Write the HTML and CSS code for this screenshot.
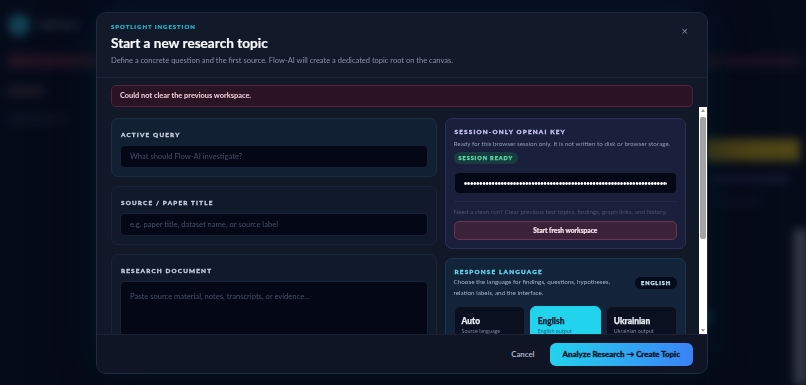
FILE: index.html
```html
<!DOCTYPE html>
<html lang="en">
<head>
  <meta charset="UTF-8" />
  <meta name="viewport" content="width=device-width, initial-scale=1.0"/>
  <title>Flow-AI</title>
  <link rel="stylesheet" href="styles.css">
</head>

<body>
  <!-- app behind the modal, blurred -->
  <div class="app">
    <aside class="side">
      <div class="brand">
        <span class="brand-dot"></span>
        <span class="brand-name"></span>
      </div>
      <div class="side-alert"></div>
      <div class="side-item"></div>
      <div class="side-item faint"></div>
    </aside>
    <div class="canvas"></div>
    <aside class="panel">
      <div class="panel-alert"></div>
      <div class="panel-btn"></div>
      <div class="panel-line"></div>
      <div class="panel-line short"></div>
      <div class="panel-bottom">
        <span class="panel-spot"></span>
        <span class="panel-card"></span>
      </div>
    </aside>
  </div>

  <div class="overlay">
    <section class="modal">
      <header class="modal-head">
        <div>
          <p class="eyebrow">Spotlight ingestion</p>
          <h1>Start a new research topic</h1>
          <p class="lead">Define a concrete question and the first source. Flow-AI will create a dedicated topic root on the canvas.</p>
        </div>
        <button class="close" aria-label="Close">&times;</button>
      </header>

      <div class="error">Could not clear the previous workspace.</div>

      <div class="modal-body">
        <div class="scroll">
          <div class="grid">
            <div class="col">
              <div class="card card-query">
                <label class="label" for="query">Active query</label>
                <input id="query" class="field" type="text" placeholder="What should Flow-AI investigate?">
              </div>
              <div class="card">
                <label class="label" for="source">Source / paper title</label>
                <input id="source" class="field" type="text" placeholder="e.g. paper title, dataset name, or source label">
              </div>
              <div class="card">
                <label class="label" for="doc">Research document</label>
                <textarea id="doc" class="field area" placeholder="Paste source material, notes, transcripts, or evidence..."></textarea>
              </div>
            </div>

            <div class="col">
              <div class="card card-key">
                <p class="label label-key">Session-only OpenAI key</p>
                <p class="small">Ready for this browser session only. It is not written to disk or browser storage.</p>
                <span class="badge badge-ready">Session ready</span>
                <input class="field field-key" type="password" value="sk-proj-aaaaaaaaaaaaaaaaaaaaaaaaaaaaaaaaaaaaaaaaaaaaaaaaaaaaaaaaaaaaaaaaaaaaaaaaaaaaaaaaaaaaa">
                <div class="key-foot">
                  <p class="small dim">Need a clean run? Clear previous test topics, findings, graph links, and history.</p>
                  <button class="btn-reset">Start fresh workspace</button>
                </div>
              </div>

              <div class="card card-lang">
                <div class="lang-head">
                  <div>
                    <p class="label label-lang">Response language</p>
                    <p class="small lang-desc">Choose the language for findings, questions, hypotheses, relation labels, and the interface.</p>
                  </div>
                  <span class="badge badge-lang">English</span>
                </div>
                <div class="options">
                  <div class="option">
                    <strong>Auto</strong>
                    <span>Source language</span>
                  </div>
                  <div class="option active">
                    <strong>English</strong>
                    <span>English output</span>
                  </div>
                  <div class="option">
                    <strong>Ukrainian</strong>
                    <span>Ukrainian output</span>
                  </div>
                </div>
              </div>
            </div>
          </div>
        </div>

        <!-- scrollbar of the body -->
        <div class="scrollbar">
          <span class="arrow up"></span>
          <span class="track"><span class="thumb"></span></span>
          <span class="arrow down"></span>
        </div>
      </div>

      <footer class="modal-foot">
        <button class="btn-cancel">Cancel</button>
        <button class="btn-primary">Analyze Research &rarr; Create Topic</button>
      </footer>
    </section>
  </div>
</body>
</html>
```

FILE: styles.css
```css
* {
  box-sizing: border-box;
}
html, body {
  height: 100%;
}
body {
  margin: 0;
  font-family: 'Lato', 'Noto Sans', sans-serif;
  background-color: #080d1e;
  color: #e2e8f0;
  overflow: hidden;
}
p {
  margin: 0;
}

/* blurred app in the back */
.app {
  height: 100%;
  display: grid;
  grid-template-columns: 110px 1fr 110px;
  filter: blur(5px);
  opacity: 0.85;
}
.side {
  padding: 14px 8px;
  display: flex;
  flex-direction: column;
  gap: 18px;
}
.brand {
  display: flex;
  align-items: center;
  gap: 8px;
}
.brand-dot {
  width: 22px;
  height: 22px;
  border-radius: 50%;
  background: #1c6f86;
}
.brand-name {
  width: 40px;
  height: 6px;
  background: #3a4252;
}
.side-alert {
  height: 14px;
  background: #3b1c2e;
}
.side-item {
  width: 36px;
  height: 10px;
  background: #2e2830;
}
.side-item.faint {
  width: 60px;
  background: #161c2c;
}
.canvas {
  background: #0a1022;
}
.panel {
  padding: 55px 6px 0 4px;
  display: flex;
  flex-direction: column;
  gap: 14px;
}
.panel-alert {
  height: 12px;
  background: #2c1a2c;
  margin-bottom: 58px;
}
.panel-btn {
  height: 22px;
  background: #8b7719;
}
.panel-line {
  height: 8px;
  background: #252648;
  margin: 0 12px;
}
.panel-line.short {
  background: #171a30;
  margin-right: 40px;
}
.panel-bottom {
  flex: 1;
  display: flex;
  align-items: flex-start;
  justify-content: space-between;
  padding-top: 10px;
}
.panel-spot {
  width: 10px;
  height: 16px;
  margin-top: 80px;
  background: #1a6e84;
  border-radius: 50%;
}
.panel-card {
  width: 14px;
  height: 100%;
  background: #5a5f6c;
  margin-right: -8px;
}

/* modal */
.overlay {
  position: fixed;
  inset: 0;
  display: flex;
  align-items: center;
  justify-content: center;
  padding-right: 2px;
  background: rgba(4, 8, 20, 0.35);
}
.modal {
  width: 612px;
  height: 362px;
  display: flex;
  flex-direction: column;
  background: #111827;
  border: 1px solid #1f2b3d;
  border-radius: 10px;
  box-shadow: 0 0 40px rgba(10, 80, 110, 0.25), 0 20px 60px rgba(0, 0, 0, 0.6);
  overflow: hidden;
}
.modal-head {
  display: flex;
  justify-content: space-between;
  align-items: flex-start;
  padding: 9px 0 11px 14px;
  border-bottom: 1px solid #1c2637;
  background: #121a2a;
}
.eyebrow {
  font-size: 6px;
  line-height: 9px;
  font-weight: 900;
  letter-spacing: 0.95px;
  text-transform: uppercase;
  color: #27b6d0;
  -webkit-text-stroke: 0.2px currentColor;
}
h1 {
  margin: 4px 0 0;
  font-size: 13.6px;
  line-height: 17px;
  font-weight: 700;
  color: #f8fafc;
  -webkit-text-stroke: 0.2px currentColor;
}
.lead {
  margin-top: 4px;
  font-size: 7.5px;
  line-height: 10px;
  color: #8791a3;
}
.close {
  margin: 4px 19px 0 0;
  background: none;
  border: none;
  padding: 0;
  color: #7b8597;
  font-size: 11px;
  line-height: 10px;
  cursor: pointer;
}
.error {
  margin: 7px 14px 0 14px;
  padding: 0 8px;
  height: 22px;
  line-height: 20px;
  background: #2a1424;
  border: 1px solid #56223a;
  border-radius: 5px;
  font-size: 7.4px;
  font-weight: 700;
  color: #f3d3dd;
}
.modal-body {
  flex: 1;
  min-height: 0;
  display: flex;
}
.scroll {
  flex: 1;
  overflow: hidden;
  padding: 11px 13px 12px 14px;
}
.scrollbar {
  width: 8px;
  display: flex;
  flex-direction: column;
  align-items: center;
  background: #fff;
  padding: 2px 0;
}
.arrow {
  width: 0;
  height: 0;
  border-left: 2px solid transparent;
  border-right: 2px solid transparent;
}
.arrow.up {
  border-bottom: 3px solid #9a9a9a;
}
.arrow.down {
  border-top: 3px solid #9a9a9a;
}
.track {
  flex: 1;
  width: 100%;
  padding: 5px 1px;
}
.thumb {
  display: block;
  height: 122px;
  background: #a3a3a3;
  border-radius: 2px;
}
.grid {
  display: grid;
  grid-template-columns: 325fr 241fr;
  gap: 8px;
}
.col {
  display: flex;
  flex-direction: column;
  gap: 9px;
}
.card {
  background: #101a2b;
  border: 1px solid #18243a;
  border-radius: 7px;
  padding: 11px 8px 8px;
}
.card-query {
  background: #122033;
  border-color: #1b2e42;
}
.label {
  display: block;
  margin: 0 0 6px 1px;
  font-size: 6.3px;
  line-height: 9px;
  font-weight: 900;
  letter-spacing: 1.2px;
  text-transform: uppercase;
  color: #c6d0df;
  -webkit-text-stroke: 0.3px currentColor;
}
.field {
  display: block;
  width: 100%;
  height: 23px;
  padding: 0 9px;
  background: #030716;
  border: 1px solid #172238;
  border-radius: 5px;
  font-family: inherit;
  font-size: 7.6px;
  color: #e2e8f0;
  outline: none;
}
.field::placeholder {
  color: #465166;
}
.area {
  height: 170px;
  padding: 9px;
  resize: none;
}
.small {
  font-size: 6.3px;
  line-height: 11px;
  color: #8f9ab0;
}
.dim {
  color: #4a5470;
}
.card-key {
  background: #1a1f3b;
  border-color: #2a3058;
  padding: 8px;
}
.label-key {
  color: #c9c6f4;
  margin-bottom: 2px;
}
.badge {
  display: block;
  width: fit-content;
  padding: 0 5px;
  height: 12px;
  line-height: 12px;
  border-radius: 6px;
  font-size: 5.6px;
  font-weight: 900;
  letter-spacing: 0.9px;
  text-transform: uppercase;
  -webkit-text-stroke: 0.25px currentColor;
}
.badge-ready {
  margin-top: 3px;
  background: #173b3f;
  color: #5fe0a6;
}
.field-key {
  margin-top: 8px;
  height: 22px;
  font-size: 7px;
  letter-spacing: -1px;
  color: #fff;
}
.key-foot {
  margin-top: 7px;
  padding-top: 4px;
  border-top: 1px solid #22284a;
}
.btn-reset {
  display: block;
  width: 100%;
  margin-top: 4px;
  height: 19px;
  background: #3a2338;
  border: 1px solid #6c3350;
  border-radius: 5px;
  font-family: inherit;
  font-size: 6.6px;
  font-weight: 900;
  color: #f3dde6;
  -webkit-text-stroke: 0.2px currentColor;
  cursor: pointer;
}
.card-lang {
  background: #12233a;
  border-color: #1c3651;
  padding: 8px 8px 10px;
}
.lang-head {
  display: flex;
  justify-content: space-between;
  align-items: flex-start;
  gap: 18px;
}
.label-lang {
  color: #62d9f0;
  margin-bottom: 0;
}
.lang-desc {
  color: #a5b1c5;
}
.badge-lang {
  margin-top: 10px;
  padding: 0 6px;
  background: #050a1a;
  color: #bff0fa;
  flex-shrink: 0;
}
.options {
  margin-top: 8px;
  display: grid;
  grid-template-columns: repeat(3, 1fr);
  gap: 5px;
}
.option {
  display: flex;
  flex-direction: column;
  gap: 2px;
  height: 44px;
  padding: 9px 7px;
  background: #0a1020;
  border: 1px solid #1a2336;
  border-radius: 6px;
}
.option strong {
  font-size: 8.4px;
  font-weight: 900;
  color: #e8edf5;
  -webkit-text-stroke: 0.25px currentColor;
}
.option span {
  font-size: 5.4px;
  color: #7a869a;
}
.option.active {
  background: #22d3ee;
  border-color: #22d3ee;
}
.option.active strong {
  color: #0a1a2e;
}
.option.active span {
  color: #156a7e;
}
.modal-foot {
  display: flex;
  justify-content: flex-end;
  align-items: center;
  gap: 15px;
  padding: 8px 14px 7px;
  border-top: 1px solid #182233;
  background: #0f1524;
}
.btn-cancel {
  padding: 0;
  background: none;
  border: none;
  font-family: inherit;
  font-size: 7.8px;
  font-weight: 700;
  color: #a9b3c3;
  cursor: pointer;
}
.btn-primary {
  height: 23px;
  padding: 0 13px;
  border: none;
  border-radius: 6px;
  background: linear-gradient(90deg, #22d3ee, #3b82f6);
  font-family: inherit;
  font-size: 7.9px;
  font-weight: 900;
  color: #0b1324;
  -webkit-text-stroke: 0.3px currentColor;
  cursor: pointer;
}
```
